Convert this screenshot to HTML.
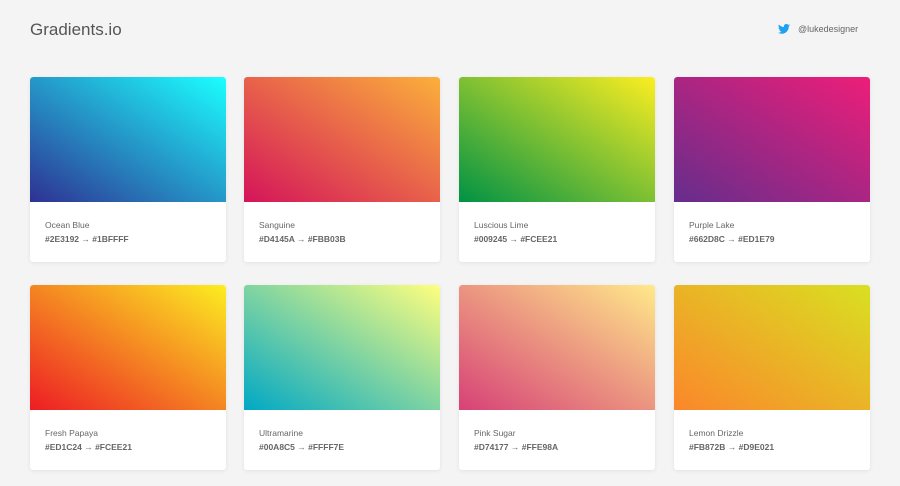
<!DOCTYPE html><html><head><style>
body{margin:0;background:#f4f4f4;font-family:"Liberation Sans",sans-serif;width:900px;height:486px;overflow:hidden;position:relative}
h1{position:absolute;left:30px;top:20px;margin:0;font-size:17px;font-weight:normal;color:#555}
.tw{position:absolute;left:778px;top:24px;font-size:9px;color:#666;display:flex;align-items:center}
.tw svg{margin-right:8px}
.c{position:absolute;width:196px;height:185px;background:#fff;border-radius:3px;box-shadow:0 1px 4px rgba(0,0,0,.08);overflow:hidden}
.g{height:125px;border-radius:3px 3px 0 0}
.n{position:absolute;left:15px;top:143px;font-size:8.5px;color:#666}
.h{position:absolute;left:15px;top:157px;font-size:8.5px;color:#666;font-weight:bold}
</style></head><body>
<h1>Gradients.io</h1>
<div class="tw"><svg width="12" height="10" viewBox="0 0 24 20"><path fill="#1DA1F2" d="M24 2.4c-.9.4-1.8.7-2.8.8 1-.6 1.8-1.600 2.200-2.700-1 .6-2 1-3.100 1.200C19.4.7 18.1 0 16.6 0c-2.700 0-4.900 2.200-4.900 4.900 0 .4 0 .8.1 1.100C7.7 5.8 4.1 3.9 1.7.9c-.4.7-.7 1.6-.7 2.5 0 1.7.9 3.2 2.2 4.1-.8 0-1.600-.2-2.200-.6v.1c0 2.400 1.700 4.400 3.900 4.800-.4.1-.8.2-1.300.2-.3 0-.6 0-.9-.1.6 2 2.400 3.400 4.600 3.400-1.700 1.300-3.800 2.100-6.100 2.100-.4 0-.8 0-1.200-.1 2.200 1.400 4.800 2.200 7.500 2.200 9.100 0 14-7.500 14-14v-.6c1-.7 1.800-1.600 2.500-2.500z"/></svg>@lukedesigner</div>
<div class="c" style="left:30px;top:77px"><div class="g" style="background:linear-gradient(to top right,#2E3192,#1BFFFF)"></div><div class="n">Ocean Blue</div><div class="h">#2E3192 → #1BFFFF</div></div>
<div class="c" style="left:244px;top:77px"><div class="g" style="background:linear-gradient(to top right,#D4145A,#FBB03B)"></div><div class="n">Sanguine</div><div class="h">#D4145A → #FBB03B</div></div>
<div class="c" style="left:459px;top:77px"><div class="g" style="background:linear-gradient(to top right,#009245,#FCEE21)"></div><div class="n">Luscious Lime</div><div class="h">#009245 → #FCEE21</div></div>
<div class="c" style="left:674px;top:77px"><div class="g" style="background:linear-gradient(to top right,#662D8C,#ED1E79)"></div><div class="n">Purple Lake</div><div class="h">#662D8C → #ED1E79</div></div>
<div class="c" style="left:30px;top:285px"><div class="g" style="background:linear-gradient(to top right,#ED1C24,#FCEE21)"></div><div class="n">Fresh Papaya</div><div class="h">#ED1C24 → #FCEE21</div></div>
<div class="c" style="left:244px;top:285px"><div class="g" style="background:linear-gradient(to top right,#00A8C5,#FFFF7E)"></div><div class="n">Ultramarine</div><div class="h">#00A8C5 → #FFFF7E</div></div>
<div class="c" style="left:459px;top:285px"><div class="g" style="background:linear-gradient(to top right,#D74177,#FFE98A)"></div><div class="n">Pink Sugar</div><div class="h">#D74177 → #FFE98A</div></div>
<div class="c" style="left:674px;top:285px"><div class="g" style="background:linear-gradient(to top right,#FB872B,#D9E021)"></div><div class="n">Lemon Drizzle</div><div class="h">#FB872B → #D9E021</div></div>
</body></html>
